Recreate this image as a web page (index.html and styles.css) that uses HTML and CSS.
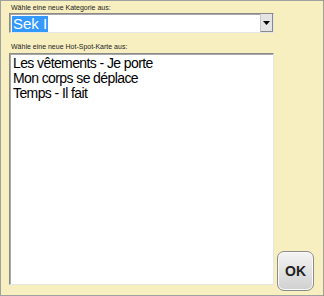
FILE: index.html
```html
<!DOCTYPE html>
<html>
<head>
<meta charset="utf-8">
<link rel="stylesheet" href="styles.css">
</head>
<body>
<div class="panel">
  <div class="main">
    <div class="label">Wähle eine neue Kategorie aus:</div>
    <div class="select">
      <div class="select-value"><span class="sel">Sek I</span></div>
      <div class="select-btn">
        <svg width="7" height="4" viewBox="0 0 7 4"><path d="M0 0H7L3.5 4Z" fill="#000"/></svg>
      </div>
    </div>
    <div class="label label2">Wähle eine neue Hot-Spot-Karte aus:</div>
    <div class="list">
      <div class="item">Les vêtements - Je porte</div>
      <div class="item">Mon corps se déplace</div>
      <div class="item">Temps - Il fait</div>
    </div>
  </div>
  <div class="side">
    <div class="ok">OK</div>
  </div>
</div>
</body>
</html>
```
FILE: styles.css
```css
html, body {
  margin: 0;
  padding: 0;
}
body {
  font-family: "Liberation Sans", Arial, sans-serif;
}
.panel {
  box-sizing: border-box;
  width: 324px;
  height: 296px;
  background: #f8efc0;
  border: 1px solid #a0a0a0;
  display: flex;
  padding: 2px 0 0 8px;
}
.main {
  width: 265px;
  display: flex;
  flex-direction: column;
}
.label {
  font-size: 7px;
  color: #222;
  height: 9px;
  line-height: 9px;
  padding-left: 2px;
}
.select {
  margin-top: 1px;
  box-sizing: border-box;
  height: 20px;
  background: #fff;
  border-top: 1px solid #8a8a8a;
  border-left: 1px solid #8a8a8a;
  border-bottom: 1px solid #e6e6e6;
  border-right: 1px solid #e6e6e6;
  box-shadow: inset 1px 1px 0 #a8a8a8;
  display: flex;
  padding: 1px 0 0 2px;
}
.select-value {
  flex: 1;
  display: flex;
  align-items: center;
}
.sel {
  background: #3399ff;
  color: #fff;
  font-size: 15px;
  line-height: 16px;
  padding: 0 1px;
}
.select-btn {
  width: 11px;
  background: #e4e4e4;
  border-left: 1px solid #c8c8c8;
  border-bottom: 1px solid #8a8a8a;
  border-right: 1px solid #8a8a8a;
  display: flex;
  align-items: center;
  justify-content: center;
  margin-top: -1px;
}
.label2 {
  margin-top: 9px;
}
.list {
  margin-top: 2px;
  box-sizing: border-box;
  height: 232px;
  background: #fff;
  border-top: 1px solid #8a8a8a;
  border-left: 1px solid #8a8a8a;
  border-bottom: 1px solid #e6e6e6;
  border-right: 1px solid #e6e6e6;
  box-shadow: inset 1px 1px 0 #a8a8a8;
  padding: 2px 0 0 3px;
}
.item {
  font-size: 14px;
  line-height: 15px;
  letter-spacing: -0.6px;
  color: #000;
}
.side {
  flex: 1;
  display: flex;
  align-items: flex-end;
  padding: 0 0 4px 3px;
}
.ok {
  box-sizing: border-box;
  width: 37px;
  height: 40px;
  border: 1px solid #8c8c8c;
  border-radius: 7px;
  background: linear-gradient(#f4f4f4, #d0d0d0);
  box-shadow: inset 0 0 0 1px #fafafa;
  display: flex;
  align-items: center;
  justify-content: center;
  font-weight: bold;
  font-size: 14px;
  color: #222;
}
```
